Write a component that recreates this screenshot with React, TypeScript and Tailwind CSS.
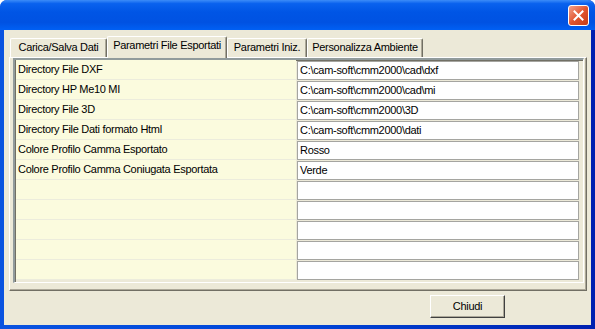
import { useState } from "react";

const TABS = ["Carica/Salva Dati", "Parametri File Esportati", "Parametri Iniz.", "Personalizza Ambiente"];
const TAB_W = ["w-[97px]", "w-[120px]", "w-[80px]", "w-[116px]"];

const ROWS: [string, string][] = [
  ["Directory File DXF", "C:\\cam-soft\\cmm2000\\cad\\dxf"],
  ["Directory HP Me10 MI", "C:\\cam-soft\\cmm2000\\cad\\mi"],
  ["Directory File 3D", "C:\\cam-soft\\cmm2000\\3D"],
  ["Directory File Dati formato Html", "C:\\cam-soft\\cmm2000\\dati"],
  ["Colore Profilo Camma Esportato", "Rosso"],
  ["Colore Profilo Camma Coniugata Esportata", "Verde"],
  ["", ""],
  ["", ""],
  ["", ""],
  ["", ""],
  ["", ""],
];

function CloseButton() {
  return (
    <div className="w-[21px] h-[21px] rounded-[3px] border border-white bg-gradient-to-br from-[#F0A08A] via-[#E2552E] to-[#C63B14] flex items-center justify-center">
      <svg width="11" height="11" viewBox="0 0 11 11">
        <path d="M1.5 1.5 L9.5 9.5 M9.5 1.5 L1.5 9.5" stroke="white" strokeWidth="2" strokeLinecap="square" />
      </svg>
    </div>
  );
}

export default function App() {
  const [tab, setTab] = useState(1);
  return (
    <div className="w-[595px] h-[329px] bg-white font-['Liberation_Sans',Arial,sans-serif] text-[11px] tracking-[-0.3px] text-black">
      <div className="w-full h-full flex flex-col rounded-t-[7px] overflow-hidden bg-gradient-to-r from-[#0A53E0] via-[#0046D8] to-[#0020B0]">
        {/* Title bar */}
        <div className="h-[30px] flex items-start justify-end pr-[6px] pt-[5px] bg-[linear-gradient(to_bottom,#3C8CF8_0%,#0A62EE_12%,#0055E5_40%,#0052E2_75%,#0060F4_100%)]">
          <CloseButton />
        </div>

        {/* Client area */}
        <div className="flex-1 mx-[4px] mb-[4px] bg-[#ECE9D8] flex flex-col">
          {/* Tab strip */}
          <div className="h-[27px] flex items-end pl-[6px]">
            {TABS.map((t, i) => {
              const active = i === tab;
              return (
                <button
                  key={t}
                  onClick={() => setTab(i)}
                  className={`${TAB_W[i]} ${active ? "h-[22px] relative z-10 -mb-px pb-[4px]" : "h-[19px] pb-px"} bg-[#ECE9D8] border-l border-t border-white border-r border-r-[#716F64] rounded-t-[2px] shadow-[inset_-1px_0_0_#ACA899] flex items-center justify-center whitespace-nowrap`}
                >
                  {t}
                </button>
              );
            })}
          </div>

          {/* Tab panel */}
          <div className="ml-[5px] mr-[4px] h-[234px] border-l border-t border-white border-r border-b border-r-[#716F64] border-b-[#716F64] shadow-[inset_-1px_-1px_0_#ACA899] pl-[3px] pr-[2px]">
            <div className="h-[225px] border-l-2 border-t-2 border-l-[#919B9C] border-t-[#919B9C] border-r border-b border-r-white border-b-white shadow-[inset_1px_1px_0_#716F64] pl-px pr-[4px] flex flex-col">
              {ROWS.map(([label, value], i) => (
                <div key={i} className="h-[20px] flex">
                  <div className="w-[280px] h-[20px] bg-[#FBFBDE] border-b border-[#ECECDC] pl-[2px] flex items-center whitespace-nowrap overflow-hidden">
                    {label}
                  </div>
                  <div className="flex-1 pl-[1px] pt-[1px]">
                    <div className="h-[19px] bg-white border border-[#A5A5A0] pl-[2px] flex items-center whitespace-nowrap overflow-hidden">
                      {value}
                    </div>
                  </div>
                </div>
              ))}
            </div>
          </div>

          {/* Buttons */}
          <div className="flex justify-end pr-[86px] pt-[4px]">
            <button className="w-[75px] h-[23px] bg-[#ECE9D8] border border-t-white border-l-white border-r-[#404040] border-b-[#404040] shadow-[inset_-1px_-1px_0_#ACA899] flex items-center justify-center">
              Chiudi
            </button>
          </div>
        </div>
      </div>
    </div>
  );
}
